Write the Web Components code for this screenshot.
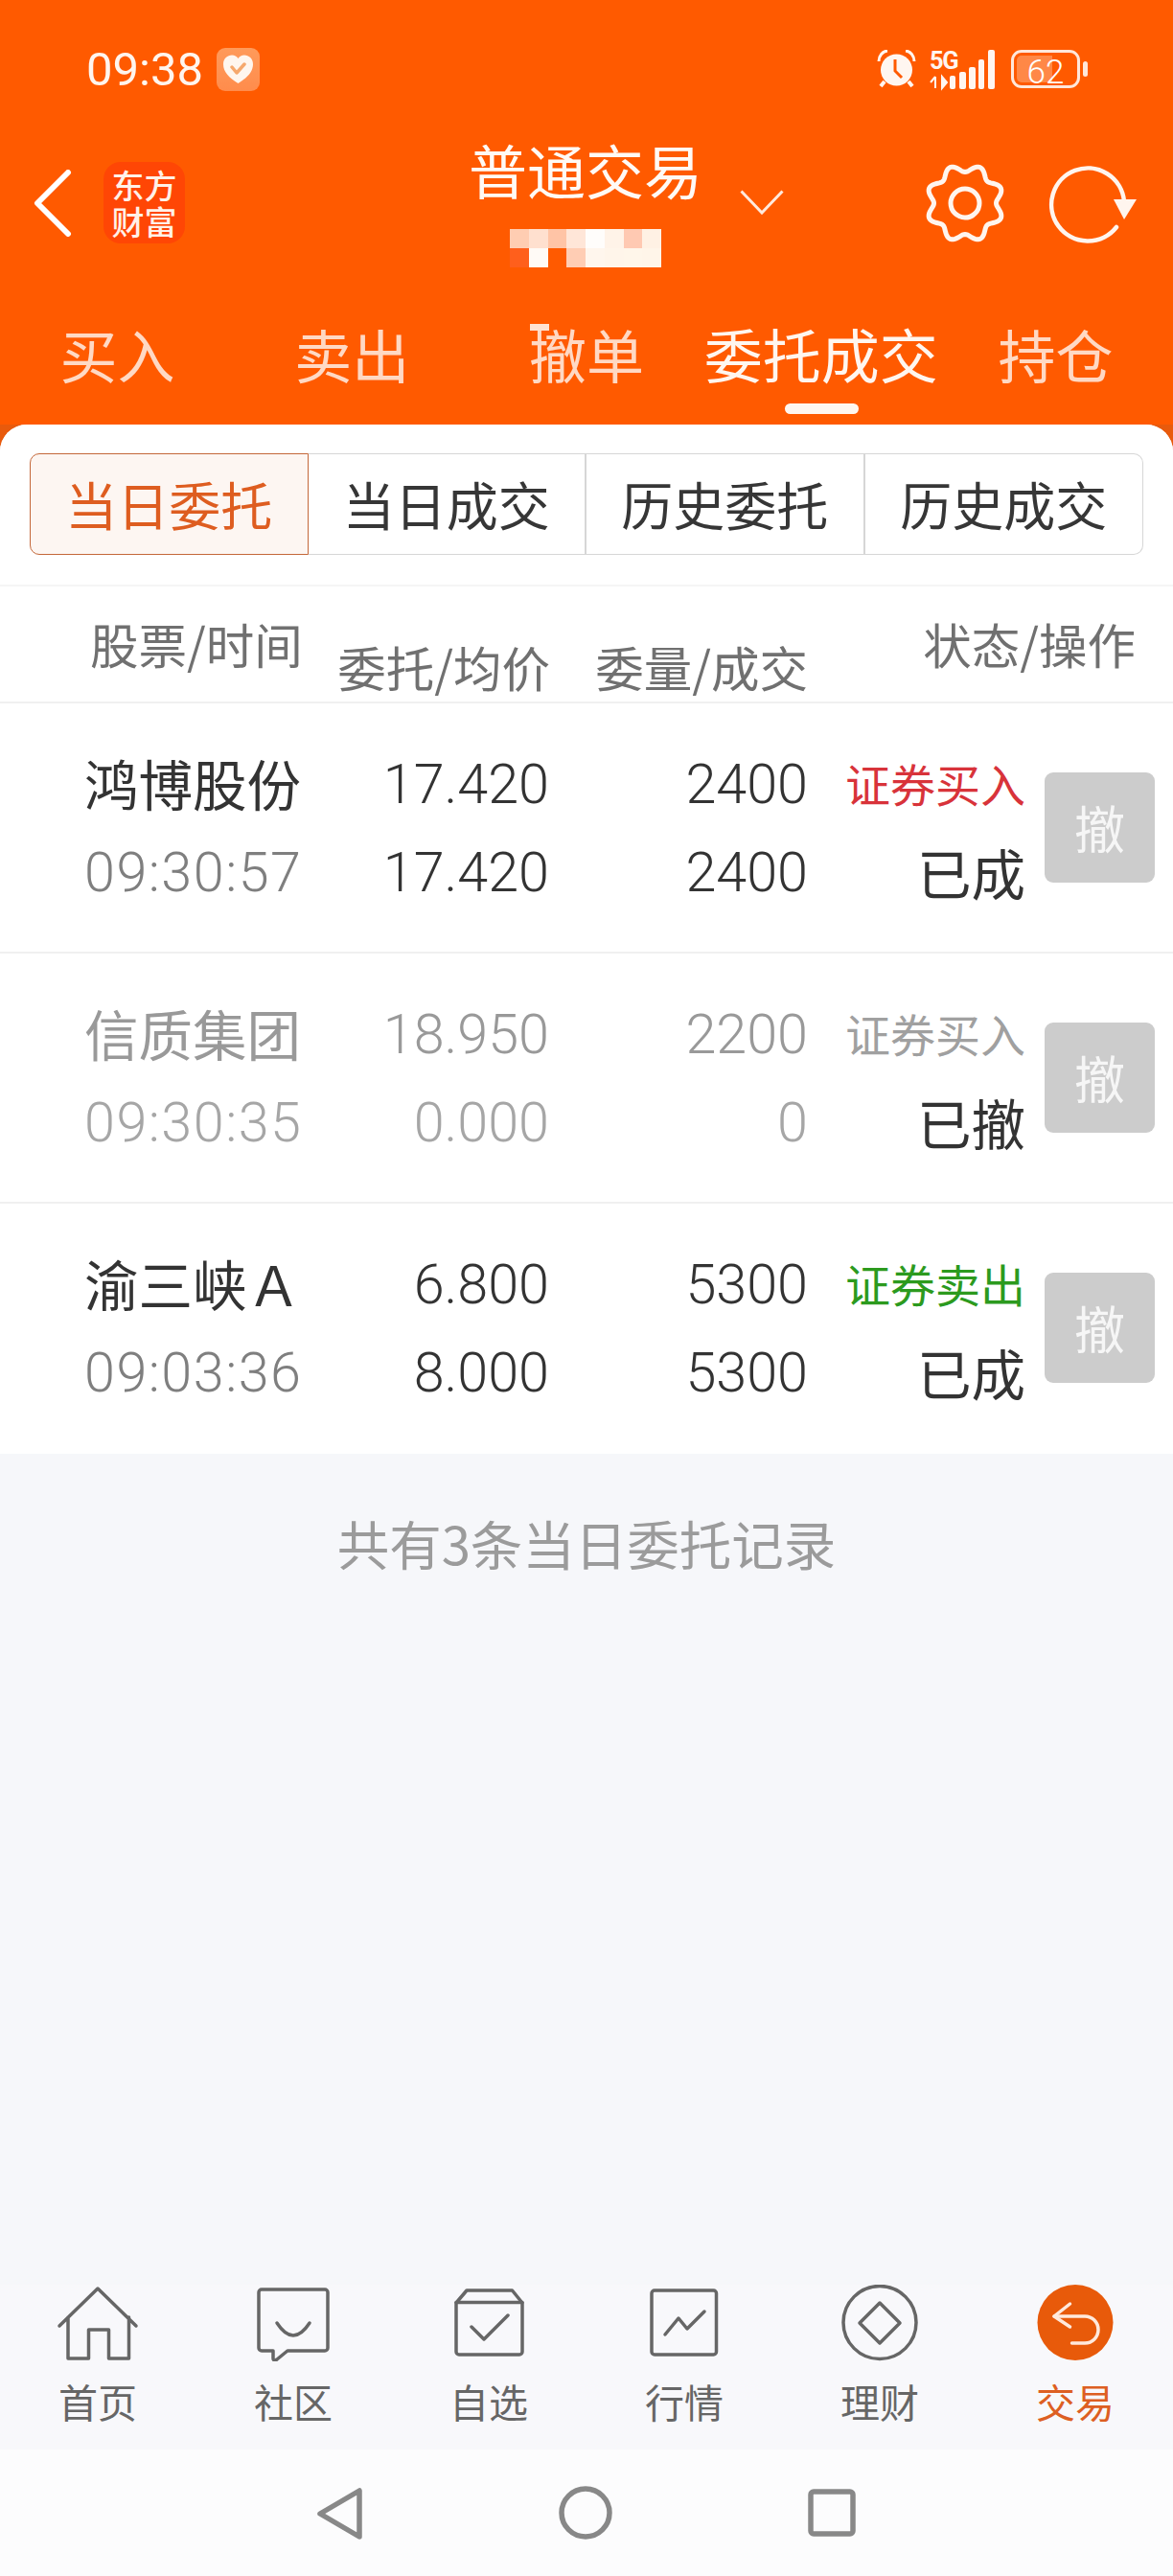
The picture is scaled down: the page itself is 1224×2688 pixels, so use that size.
<!DOCTYPE html>
<html lang="zh">
<head>
<meta charset="utf-8">
<style>
  html, body { margin: 0; height: 100%; }
  body {
    width: 1224px; height: 2688px; overflow: hidden;
    display: flex; flex-direction: column;
    background: #f6f7fa;
    font-family: "Noto Sans CJK SC", "Noto Sans", sans-serif;
  }
  main-panel { flex: 1; }
</style>
</head>
<body>
  <trade-header></trade-header>
  <main-panel>
    <seg-control></seg-control>
    <order-head></order-head>
    <order-row name="鸿博股份" time="09:30:57" price="17.420" avg="17.420" qty="2400" done="2400" kind="证券买入" state="已成" tone="buy"></order-row>
    <order-row name="信质集团" time="09:30:35" price="18.950" avg="0.000" qty="2200" done="0" kind="证券买入" state="已撤" tone="off"></order-row>
    <order-row name="渝三峡Ａ" time="09:03:36" price="6.800" avg="8.000" qty="5300" done="5300" kind="证券卖出" state="已成" tone="sell"></order-row>
    <empty-note>共有3条当日委托记录</empty-note>
  </main-panel>
  <bottom-nav></bottom-nav>
  <sys-nav></sys-nav>

<script>
const CJK = '"Noto Sans CJK SC", "Noto Sans", sans-serif';

window.customElements.define('status-bar', class extends HTMLElement {
  constructor(){ super(); this.attachShadow({mode:'open'}); }
  connectedCallback(){
    this.shadowRoot.innerHTML = `
    <style>
      :host{ display:flex; align-items:center; height:110px; padding:34px 89px 0 90px; box-sizing:border-box; color:#fff5ee; }
      .time{ font:400 49px/1 Roboto,sans-serif; }
      .tile{ width:45px; height:45px; margin-left:14px; border-radius:9px; background:linear-gradient(#ff9a5a,#ff8c4c); display:grid; place-items:center; }
      .right{ margin-left:auto; display:flex; align-items:center; }
      .batt{ width:72px; height:40px; box-sizing:border-box; margin-left:17px; border:3px solid #ffe7da; border-radius:11px;
        background:linear-gradient(90deg,rgba(255,255,255,.28) 62%,transparent 62%) content-box;
        padding:3px; display:grid; place-items:center; font:300 35px/1 Roboto,sans-serif; color:#fff; }
      .nub{ width:5px; height:16px; margin-left:3px; background:#ffe7da; border-radius:3px; }
      svg{ display:block; }
    </style>
    <span class="time">09:38</span>
    <span class="tile">
      <svg width="33" height="33" viewBox="0 0 33 33">
        <path d="M16.5 31C7 25 1 19 1 11 1 5 5.500 1.500 10 1.500c3 0 5 1.500 6.500 3.500C18 3 20 1.500 23 1.500 27.500 1.500 32 5 32 11c0 8-6 14-15.500 20z" fill="#fff6ee"/>
        <path d="M10 14l5 6 8-9" fill="none" stroke="#f6a86c" stroke-width="3.500" stroke-linecap="round" stroke-linejoin="round"/>
      </svg>
    </span>
    <div class="right">
      <svg width="41" height="40" viewBox="0 0 41 40">
        <circle cx="20.500" cy="21" r="16.500" fill="#fff6f0"/>
        <path d="M2 12C2 6 6 1.500 11 1M39 12C39 6 35 1.500 30 1" fill="none" stroke="#fff6f0" stroke-width="3"/>
        <path d="M8 33l-4 5M33 33l4 5" stroke="#fff6f0" stroke-width="4"/>
        <path d="M19 10v12l7 7" fill="none" stroke="#ff5a00" stroke-width="3"/>
      </svg>
      <svg width="68" height="42" viewBox="0 0 68 42" style="margin-left:14px;overflow:visible">
        <text x="0" y="21" font-family="Roboto,sans-serif" font-weight="700" font-size="26" letter-spacing="-1.500" fill="#fff6f0" textLength="29" lengthAdjust="spacingAndGlyphs">5G</text>
        <path d="M6 29v12M1 35l5-6M13 41V29l5 6z" fill="#fff6f0" stroke="#fff6f0" stroke-width="2"/>
        <g fill="#fff6f0">
          <rect x="21" y="28" width="6" height="14" rx="2"/>
          <rect x="31" y="24" width="7" height="18" rx="2"/>
          <rect x="41" y="19" width="7" height="23" rx="2"/>
          <rect x="51" y="11" width="6" height="31" rx="2"/>
          <rect x="61" y="1" width="7" height="41" rx="2"/>
        </g>
      </svg>
      <div class="batt">62</div>
      <div class="nub"></div>
    </div>`;
  }
});

window.customElements.define('trade-title', class extends HTMLElement {
  constructor(){ super(); this.attachShadow({mode:'open'}); }
  connectedCallback(){
    // mosaic cells over the blurred account number
    const cells = ['#ffcdb2','#ffe0cf','#ffc4a6','#ffe6d8','#fffdfb','#fff3e8','#ffc9b2','#fff1e4',
                   '#ff5f1c','#fffaf6','#ff5a00','#ffcdb4','#fff6ed','#fff5ea','#fff6ea','#fff5e9'];
    let gear = '';
    for(let i=0;i<=160;i++){
      const a = i/160*Math.PI*2;
      const r = 36.500 + 4*Math.cos(8*(a-Math.PI/8));
      gear += (i?'L':'M') + (43+r*Math.cos(a)).toFixed(2) + ' ' + (42+r*Math.sin(a)).toFixed(2);
    }
    this.shadowRoot.innerHTML = `
    <style>
      :host{ display:grid; grid-template-columns:493px 236px 495px; height:210px; box-sizing:border-box; color:#fff; }
      .left{ display:flex; align-items:flex-start; padding:67px 0 0 35px; box-sizing:border-box; }
      .logo{ width:85px; height:85px; margin:-8px 0 0 33px; background:#ff4605; border-radius:18px; color:#fff1e8;
        display:grid; place-items:center; }
      .logo span{ width:70px; text-align:center; word-break:break-all; font:500 34px/38px ${CJK}; }
      .mid{ display:flex; flex-direction:column; align-items:center; }
      h1{ margin:29px 0 0; font:400 61px/76px ${CJK}; white-space:nowrap; color:#fffaf5; }
      .mosaic{ display:grid; grid-template-columns:repeat(8,1fr); grid-auto-rows:20px; width:158px; margin:24px auto 0; }
      .right{ display:flex; align-items:flex-start; padding:0 36px 0 43px; }
      .chev{ margin-top:88px; }
      .gear{ margin:60px 0 0 auto; }
      .refresh{ margin:58px 0 0 44px; }
      svg{ display:block; }
    </style>
    <div class="left">
      <svg width="40" height="70" viewBox="0 0 40 70"><path d="M36 3L4 35l32 32" fill="none" stroke="#fff" stroke-width="6" stroke-linecap="round" stroke-linejoin="round"/></svg>
      <div class="logo"><span>东方财富</span></div>
    </div>
    <div class="mid">
      <h1>普通交易</h1>
      <div class="mosaic">${cells.map(c=>`<i style="background:${c}"></i>`).join('')}</div>
    </div>
    <div class="right">
      <svg class="chev" width="46" height="26" viewBox="0 0 46 26"><path d="M1.500 1.500L23 24 44.500 1.500" fill="none" stroke="#ffeadd" stroke-width="3"/></svg>
      <svg class="gear" width="86" height="84" viewBox="0 0 86 84">
        <path d="${gear}Z" fill="none" stroke="#fff5ee" stroke-width="5"/>
        <circle cx="43" cy="42" r="15" fill="none" stroke="#fff5ee" stroke-width="5"/>
      </svg>
      <svg class="refresh" width="94" height="88" viewBox="0 0 94 88">
        <path d="M71 69A38 38 0 1 1 79 42" fill="none" stroke="#fff5ee" stroke-width="4.500" stroke-linecap="round"/>
        <path d="M68 40H92L79 61z" fill="#fff5ee"/>
      </svg>
    </div>`;
  }
});

window.customElements.define('tab-bar', class extends HTMLElement {
  constructor(){ super(); this.attachShadow({mode:'open'}); }
  connectedCallback(){
    const tabs = ['买入','卖出','撤单','委托成交','持仓'];
    this.shadowRoot.innerHTML = `
    <style>
      :host{ display:grid; grid-template-columns:repeat(5,1fr); height:123px; }
      .tab{ position:relative; text-align:center; font:400 60px/98px ${CJK}; color:#ffd9c4; white-space:nowrap; }
      .tab.on{ color:#fff6ef; font-size:61px; }
      .tab.on::after{ content:""; position:absolute; left:50%; top:101px; width:77px; height:11px; margin-left:-38px; border-radius:6px; background:#fff6ef; }
      .tab.cut::before{ content:""; position:absolute; left:63px; top:18px; width:20px; height:7px; background:#ffe3d2; }
    </style>
    ${tabs.map((t,i)=>`<div class="tab${i==3?' on':''}${i==2?' cut':''}">${t}</div>`).join('')}`;
  }
});

window.customElements.define('trade-header', class extends HTMLElement {
  constructor(){ super(); this.attachShadow({mode:'open'}); }
  connectedCallback(){
    this.shadowRoot.innerHTML = `
    <style>
      :host{ display:block; height:443px; background:#ff5a00; }
    </style>
    <status-bar></status-bar>
    <trade-title></trade-title>
    <tab-bar></tab-bar>`;
  }
});

window.customElements.define('main-panel', class extends HTMLElement {
  constructor(){ super(); this.attachShadow({mode:'open'}); }
  connectedCallback(){
    this.shadowRoot.innerHTML = `
    <style>
      :host{ display:block; background:#e85a0c; }
      .card{ height:100%; background:#f6f7fa; border-radius:28px 28px 0 0; overflow:hidden; }
    </style>
    <div class="card"><slot></slot></div>`;
  }
});

window.customElements.define('seg-control', class extends HTMLElement {
  constructor(){ super(); this.attachShadow({mode:'open'}); }
  connectedCallback(){
    const items = ['当日委托','当日成交','历史委托','历史成交'];
    this.shadowRoot.innerHTML = `
    <style>
      :host{ display:block; background:#fff; padding:30px 31px 31px; }
      .seg{ display:grid; grid-template-columns:repeat(4,1fr); height:106px; }
      .seg div{ display:grid; place-items:center; box-sizing:border-box; border:solid #d6d6d6; border-width:1px 2px 1px 0; font:400 54px/1 ${CJK}; color:#363636; white-space:nowrap; }
      .seg div:first-of-type{ border:1px solid #c4683a; border-radius:10px 0 0 10px; background:#fdf6f2; color:#de5d20; }
      .seg div:last-of-type{ border-width:1px 1px 1px 0; border-radius:0 10px 10px 0; }
    </style>
    <div class="seg">${items.map(t=>`<div>${t}</div>`).join('')}</div>`;
  }
});

window.customElements.define('order-head', class extends HTMLElement {
  constructor(){ super(); this.attachShadow({mode:'open'}); }
  connectedCallback(){
    this.shadowRoot.innerHTML = `
    <style>
      :host{ display:grid; grid-template-columns:200px 280px 269px 342px; height:124px; box-sizing:border-box; padding-left:94px;
        background:#fff; border-top:2px solid #f5f5f5; border-bottom:2px solid #f0f0f0; font:400 50.500px/1 ${CJK}; color:#707070; white-space:nowrap; }
      span{ justify-self:end; }
      .up{ margin-top:34px; }
      .down{ margin-top:58px; }
      .first{ justify-self:start; }
    </style>
    <span class="up first">股票/时间</span>
    <span class="down">委托/均价</span>
    <span class="down">委量/成交</span>
    <span class="up">状态/操作</span>`;
  }
});

window.customElements.define('order-row', class extends HTMLElement {
  static get observedAttributes(){
    return ['name','time','price','avg','qty','done','kind','state','tone'];
  }
  constructor(){ super(); this.attachShadow({mode:'open'}); }
  attributeChangedCallback(attr, oldVal, newVal){ this[attr]=newVal }
  connectedCallback(){
    const off = this.tone=='off';
    const top = off ? '#999' : '#333';
    const kindColor = {buy:'#d8333a',sell:'#2c9a1e',off:'#a0a0a0'}[this.tone];
    this.shadowRoot.innerHTML = `
    <style>
      :host{ display:grid; grid-template-columns:200px 285px 270px 227px 135px; grid-template-rows:92px 92px;
        box-sizing:border-box; height:261px; padding:39px 19px 0 88px; background:#fff; border-bottom:2px solid #f0f0f0; white-space:nowrap; }
      :host(:last-of-type){ border-bottom:0; }
      div{ display:flex; align-items:center; justify-content:flex-end; }
      .num{ font:300 57.500px/1 Roboto,sans-serif; color:${top}; }
      .name{ justify-content:flex-start; padding-bottom:5px; font:400 56.500px/1 ${CJK}; color:${top}; }
      .time{ justify-content:flex-start; font:300 57.500px/1 Roboto,sans-serif; letter-spacing:1.500px; color:${off?'#a6a6a6':'#7f7f7f'}; }
      .num2{ color:${off?'#a6a6a6':'#333'}; }
      .kind{ padding-bottom:5px; font:400 47px/1 ${CJK}; color:${kindColor}; }
      .state{ padding-bottom:3px; font:400 56.500px/1 ${CJK}; color:#333; }
      button{ grid-column:5; grid-row:1/3; align-self:center; width:115px; height:115px; margin:-3px 0 0 20px; padding:0;
        border:0; border-radius:9px; background:#ccc; color:#f6f6f6; font:400 53px/1 ${CJK}; }
    </style>
    <div class="name">${this.name}</div>
    <div class="num">${this.price}</div>
    <div class="num">${this.qty}</div>
    <div class="kind">${this.kind}</div>
    <button>撤</button>
    <div class="time">${this.time}</div>
    <div class="num num2">${this.avg}</div>
    <div class="num num2">${this.done}</div>
    <div class="state">${this.state}</div>`;
  }
});

window.customElements.define('empty-note', class extends HTMLElement {
  constructor(){ super(); this.attachShadow({mode:'open'}); }
  connectedCallback(){
    this.shadowRoot.innerHTML = `
    <style>
      :host{ display:block; padding-top:57px; text-align:center; font:400 54.500px/72px ${CJK}; color:#9b9b9b; }
    </style>
    <slot></slot>`;
  }
});

const NAV_ICONS = {
  home:`<path d="M5 43L45 4l40 39M14 34v43h21.500V47h21v30H77.500V34"/>`,
  chat:`<path d="M12 5H78a3 3 0 0 1 3 3V66a3 3 0 0 1-3 3H39L28 78c-2 1.500-4 1-4-1V69H12a3 3 0 0 1-3-3V8a3 3 0 0 1 3-3z"/><path d="M28 40Q45 66 62 40"/>`,
  box:`<path d="M22 6H69.500L80 19V70a3 3 0 0 1-3 3H14a3 3 0 0 1-3-3V19z"/><path d="M11 18.500H80"/><path d="M27 44l13 13 25-25"/>`,
  chart:`<rect x="11" y="6" width="67.500" height="67" rx="3"/><path d="M25 52l14-17 9 11 18-18"/>`,
  money:`<circle cx="45" cy="39.500" r="38"/><path d="M45 19l21 21-21 21-21-21z"/>`,
  trade:`<circle cx="45" cy="39.500" r="39.500" fill="#e85a0a" stroke="none"/><g stroke="#ffe9dc"><path d="M39.500 20L23 33l16.500 11"/><path d="M23 33H55a14 14 0 0 1 0 28H41.500"/></g>`
};

window.customElements.define('nav-item', class extends HTMLElement {
  static get observedAttributes(){ return ['icon','active']; }
  constructor(){ super(); this.attachShadow({mode:'open'}); }
  attributeChangedCallback(attr, oldVal, newVal){ this[attr]=newVal }
  connectedCallback(){
    this.shadowRoot.innerHTML = `
    <style>
      :host{ display:flex; flex-direction:column; align-items:center; }
      svg{ display:block; fill:none; stroke:#666; stroke-width:3.500; stroke-linejoin:round; stroke-linecap:round; }
      .label{ margin-top:17px; font:400 41px/48px ${CJK}; color:${this.active!=null?'#dd5f22':'#666'}; white-space:nowrap; }
    </style>
    <svg width="90" height="80" viewBox="0 0 90 80">${NAV_ICONS[this.icon]}</svg>
    <div class="label"><slot></slot></div>`;
  }
});

window.customElements.define('bottom-nav', class extends HTMLElement {
  constructor(){ super(); this.attachShadow({mode:'open'}); }
  connectedCallback(){
    this.shadowRoot.innerHTML = `
    <style>
      :host{ display:grid; grid-template-columns:repeat(6,1fr); height:172px; box-sizing:border-box; background:#f8f8fb; }
    </style>
    <nav-item icon="home">首页</nav-item>
    <nav-item icon="chat">社区</nav-item>
    <nav-item icon="box">自选</nav-item>
    <nav-item icon="chart">行情</nav-item>
    <nav-item icon="money">理财</nav-item>
    <nav-item icon="trade" active>交易</nav-item>`;
  }
});

window.customElements.define('sys-nav', class extends HTMLElement {
  constructor(){ super(); this.attachShadow({mode:'open'}); }
  connectedCallback(){
    this.shadowRoot.innerHTML = `
    <style>
      :host{ display:flex; justify-content:center; align-items:flex-start; height:132px; box-sizing:border-box; padding:40px 0 0 0; background:#fcfcfd; }
      svg{ display:block; fill:none; stroke:#888; stroke-width:5.500; stroke-linejoin:round; }
    </style>
    <svg width="48" height="54" viewBox="0 0 48 54"><path d="M3 27L44 3v48z"/></svg>
    <svg width="56" height="56" viewBox="0 0 56 56" style="margin:-2px 0 0 204px"><circle cx="28" cy="28" r="25"/></svg>
    <svg width="50" height="50" viewBox="0 0 50 50" style="margin:1px 0 0 204px"><rect x="3" y="3" width="44" height="44" rx="3"/></svg>`;
  }
});
</script>
</body>
</html>
